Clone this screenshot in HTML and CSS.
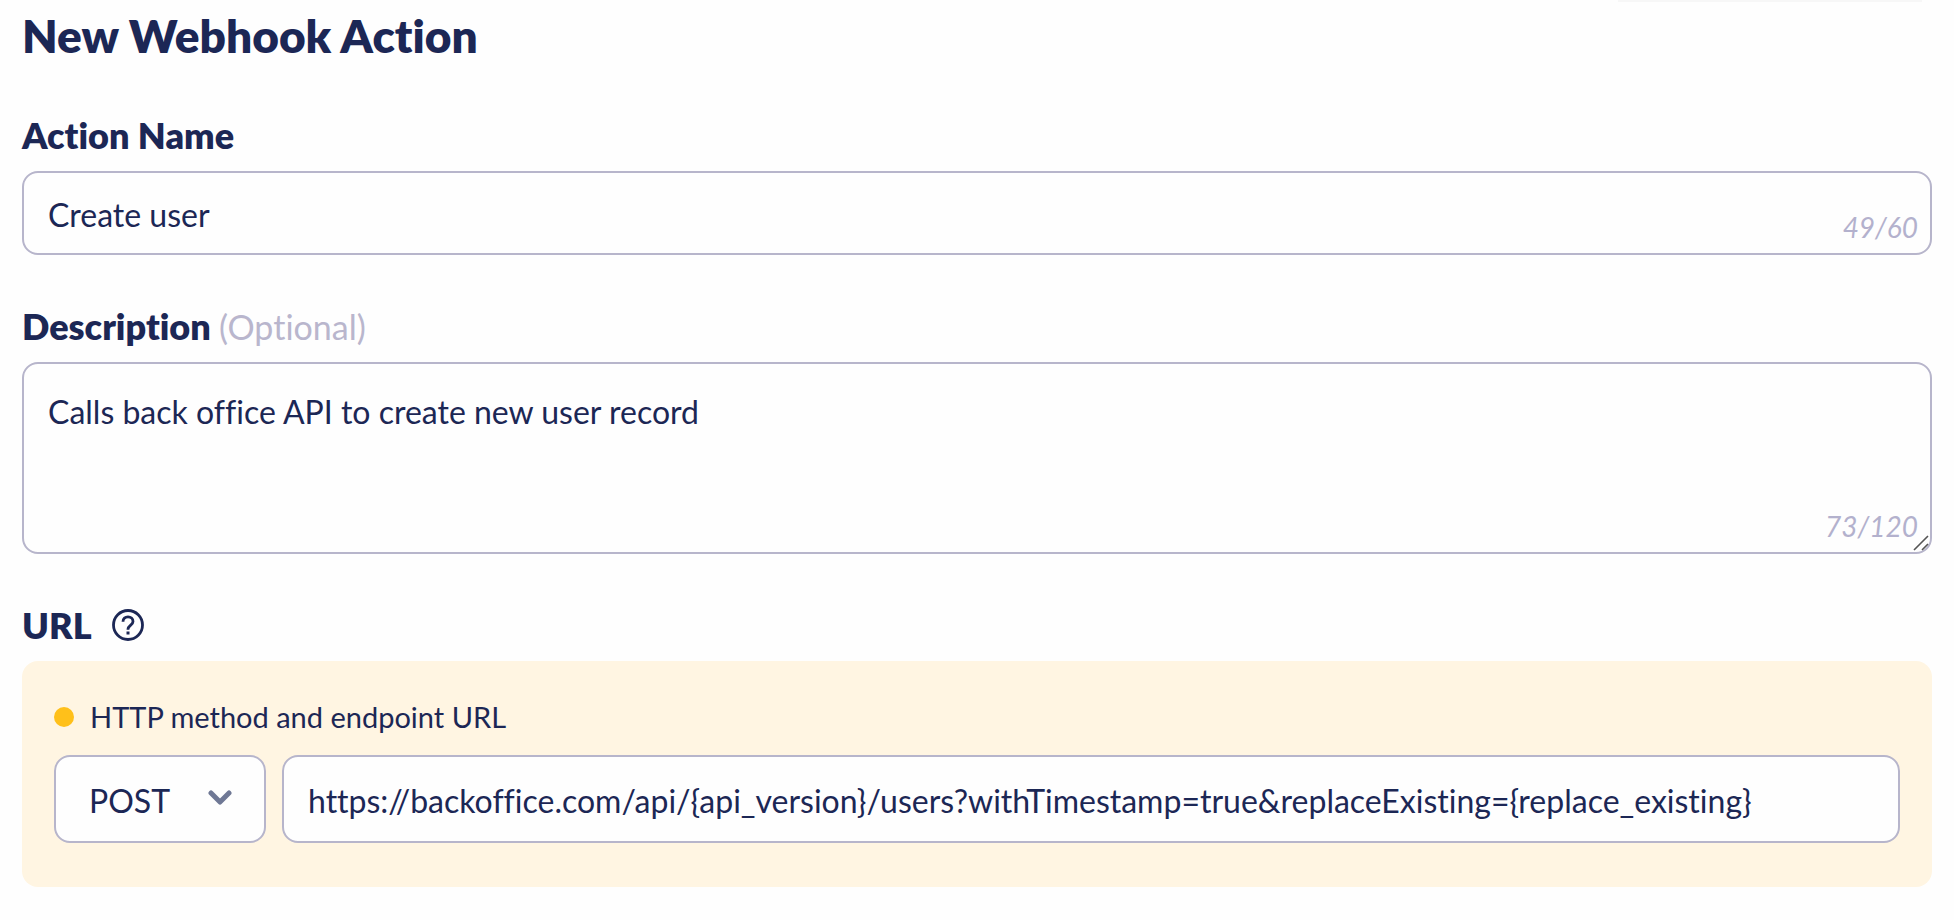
FILE: index.html
```html
<!DOCTYPE html>
<html lang="en">
<head>
<meta charset="utf-8">
<meta name="viewport" content="width=device-width, initial-scale=1">
<title>New Webhook Action</title>
<link rel="stylesheet" href="styles.css">
</head>
<body>
<div class="top-edge"></div>
<main class="page">
  <h1 class="title">New Webhook Action</h1>
  <form class="form">
    <div class="field">
      <label class="label" for="name">Action Name</label>
      <div class="control">
        <input class="box input" id="name" type="text" value="Create user">
        <span class="counter">49/60</span>
      </div>
    </div>
    <div class="field">
      <label class="label" for="description">Description <span class="optional">(Optional)</span></label>
      <div class="control">
        <textarea class="box textarea" id="description">Calls back office API to create new user record</textarea>
        <span class="counter">73/120</span>
        <svg class="grip" viewBox="0 0 16 16" aria-hidden="true"><path d="M1 15 15 1M9 15l6-6"/></svg>
      </div>
    </div>
    <section class="field">
      <div class="heading">
        <h2 class="label">URL</h2>
        <button class="help" type="button" aria-label="Help">
          <svg viewBox="0 0 32 32" aria-hidden="true"><circle cx="16" cy="16" r="14.5"/><path d="M11 12.8c0-3.2 2.200-4.900 5-4.900s5 1.800 5 4.500c0 3.800-5 4.200-5 7.800v.6"/><path class="point" d="M14.500 22.500h3v3h-3z"/></svg>
        </button>
      </div>
      <div class="panel">
        <label class="hint" for="url"><span class="dot"></span>HTTP method and endpoint URL</label>
        <div class="endpoint">
          <div class="method">
            <select class="box select" aria-label="HTTP method">
              <option>POST</option>
              <option>GET</option>
            </select>
            <svg class="chevron" viewBox="0 0 24 16" aria-hidden="true"><path d="m3 3 9 9 9-9"/></svg>
          </div>
          <input class="box input url" id="url" type="text" value="https://backoffice.com/api/{api_version}/users?withTimestamp=true&amp;replaceExisting={replace_existing}">
        </div>
      </div>
    </section>
  </form>
</main>
</body>
</html>
```
FILE: styles.css
```css
* { box-sizing: border-box; }

body {
  margin: 0;
  background: #fefefe;
  color: #1c2755;
  font-family: Lato, "Open Sans", sans-serif;
  font-variant-ligatures: none;
}

.top-edge {
  position: absolute;
  top: 0;
  right: 32px;
  width: 304px;
  height: 2px;
  background: #f7f7f7;
}

.page { padding: 6px 22px 32px; }

.title {
  margin: 0 0 50px;
  font-size: 46px;
  line-height: 60px;
  font-weight: 800;
}

.form {
  display: flex;
  flex-direction: column;
  gap: 52px;
}

.field {
  display: flex;
  flex-direction: column;
  gap: 17px;
}

.label {
  margin: 0;
  font-size: 36px;
  line-height: 38px;
  font-weight: 800;
}

.optional {
  color: #b9b6cd;
  font-size: 34px;
  line-height: 32px;
  font-weight: 400;
}

.control, .method {
  position: relative;
  display: flex;
}

.box {
  width: 100%;
  margin: 0;
  border: 2px solid #b7b5cb;
  border-radius: 16px;
  background: #fefefe;
  color: inherit;
  font-family: inherit;
  font-variant-ligatures: none;
  font-size: 32px;
}

.input {
  height: 84px;
  padding: 2px 24px 0;
}

.textarea {
  display: block;
  height: 192px;
  padding: 28px 24px;
  line-height: 40px;
  resize: none;
}

.counter {
  position: absolute;
  right: 14px;
  bottom: 10px;
  color: #b3b1cd;
  font-size: 28px;
  line-height: 36px;
  font-style: italic;
}

.grip {
  position: absolute;
  right: 3px;
  bottom: 3px;
  width: 16px;
  height: 16px;
  fill: none;
  stroke: #555;
  stroke-width: 1.6;
}

.heading {
  display: flex;
  align-items: center;
  gap: 20px;
}

.help {
  display: flex;
  padding: 0;
  border: 0;
  background: none;
  color: inherit;
}

.help svg {
  width: 32px;
  height: 32px;
  fill: none;
  stroke: currentColor;
  stroke-width: 2.8;
}

.help .point {
  fill: currentColor;
  stroke: none;
}

.panel {
  display: flex;
  flex-direction: column;
  gap: 18px;
  padding: 36px 32px 44px;
  border-radius: 16px;
  background: #fff5e2;
}

.hint {
  display: flex;
  align-items: center;
  gap: 16px;
  font-size: 29px;
  line-height: 40px;
}

.dot {
  width: 20px;
  height: 20px;
  border-radius: 50%;
  background: #ffc01a;
}

.endpoint {
  display: flex;
  gap: 16px;
}

.method { flex: 0 0 212px; }

.select {
  height: 88px;
  padding: 2px 56px 0 33px;
  appearance: none;
}

.chevron {
  position: absolute;
  top: 35px;
  right: 34px;
  width: 24px;
  height: 16px;
  fill: none;
  stroke: #6f7895;
  stroke-width: 5;
  stroke-linecap: round;
  stroke-linejoin: round;
  pointer-events: none;
}

.url {
  flex: 1;
  min-width: 0;
  height: 88px;
}
```
